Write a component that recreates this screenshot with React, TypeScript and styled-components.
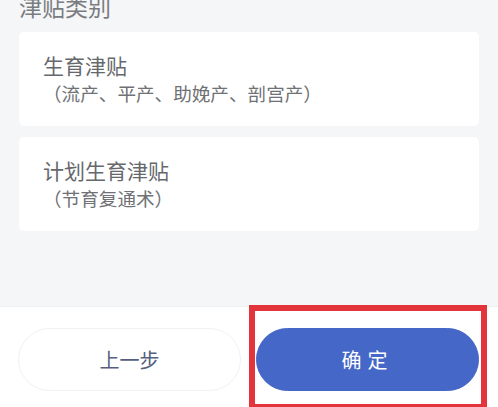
import styled, { createGlobalStyle } from "styled-components";

const GlobalStyle = createGlobalStyle`
  html, body {
    margin: 0;
    padding: 0;
    background: #f5f6f8;
  }
  * {
    box-sizing: border-box;
  }
  body {
    font-family: "Noto Sans CJK SC", "Noto Sans", sans-serif;
  }
`;

const Root = styled.div`
  display: flex;
  flex-direction: column;
  height: 407px;
  overflow: hidden;
`;

const Content = styled.div`
  flex: 1;
  overflow: hidden;
  padding: 0 19px;
  display: flex;
  flex-direction: column;
  gap: 11px;
`;

const SectionTitle = styled.div`
  margin-top: -9px;
  font-size: 23px;
  line-height: 30px;
  color: #7a7c80;
`;

const OptionCard = styled.div`
  background: #ffffff;
  border-radius: 5px;
  padding: 19px 24px;
  box-shadow: 0 0 2px rgba(0, 0, 0, 0.02);
`;

const OptionTitle = styled.div`
  font-size: 21px;
  line-height: 28px;
  color: #66686c;
`;

const OptionNote = styled.div`
  font-size: 18.6px;
  line-height: 28px;
  color: #6f7175;
`;

const Footer = styled.div`
  position: relative;
  height: 101px;
  flex-shrink: 0;
  background: #ffffff;
  border-top: 1px solid #eff0f2;
  display: flex;
  gap: 15px;
  padding: 21px 19px 0 18px;
`;

const PillButton = styled.button<{ $primary?: boolean }>`
  flex: 1;
  height: 63px;
  border-radius: 32px;
  font-family: inherit;
  font-size: 20px;
  letter-spacing: ${(p) => (p.$primary ? "6px" : "0")};
  cursor: pointer;
  border: 1px solid ${(p) => (p.$primary ? "#4567c7" : "#f0f1f3")};
  background: ${(p) => (p.$primary ? "#4567c7" : "#ffffff")};
  color: ${(p) => (p.$primary ? "#ffffff" : "#56607e")};
`;

const Highlight = styled.div`
  position: absolute;
  left: 249px;
  top: -2px;
  width: 238px;
  height: 105px;
  border: 6px solid #e3343b;
  pointer-events: none;
`;

const options = [
  { title: "生育津贴", note: "（流产、平产、助娩产、剖宫产）" },
  { title: "计划生育津贴", note: "（节育复通术）" },
];

const App = () => {
  return (
    <Root>
      <GlobalStyle />
      <Content>
        <SectionTitle>津贴类别</SectionTitle>
        {options.map((o) => (
          <OptionCard key={o.title}>
            <OptionTitle>{o.title}</OptionTitle>
            <OptionNote>{o.note}</OptionNote>
          </OptionCard>
        ))}
      </Content>
      <Footer>
        <PillButton>上一步</PillButton>
        <PillButton $primary>确定</PillButton>
        <Highlight />
      </Footer>
    </Root>
  );
};

export default App;
